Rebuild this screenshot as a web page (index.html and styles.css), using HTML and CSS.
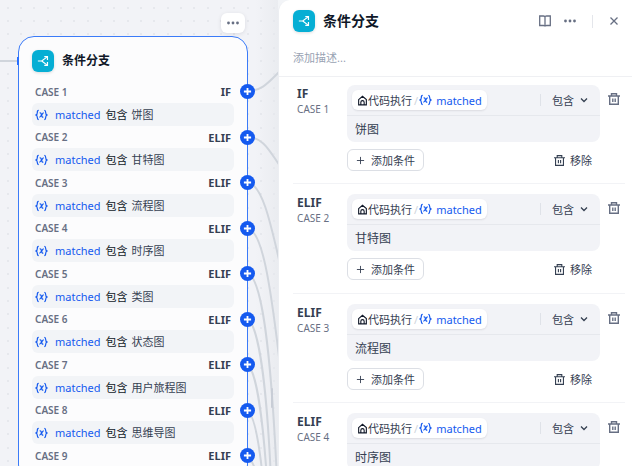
FILE: index.html
```html
<!DOCTYPE html>
<html lang="zh-CN">

<head>
  <meta charset="UTF-8" />
  <meta name="viewport" content="width=device-width, initial-scale=1.0" />
  <title>条件分支</title>
  <link rel="stylesheet" href="styles.css">
</head>

<body>
  <!-- 图标 -->
  <svg class="sprite" aria-hidden="true">
    <symbol id="i-branch" viewBox="0 0 14 14">
      <path d="M1 7h4.500L11.500 2.500M5.500 7L11.500 11.500" />
      <path d="M8.500 2h3.700v3.700M8.500 12h3.700V8.300" />
    </symbol>
    <symbol id="i-var" viewBox="0 0 14 12">
      <path d="M4 1C2.500 1 2.500 2 2.500 3.200C2.500 4.800 2.300 5.600 1 6C2.300 6.400 2.500 7.200 2.500 8.800C2.500 10 2.500 11 4 11M10 1C11.500 1 11.500 2 11.500 3.200C11.500 4.800 11.700 5.600 13 6C11.700 6.400 11.500 7.200 11.500 8.800C11.500 10 11.500 11 10 11" />
      <path d="M5 3.800C6.200 3.400 6.500 4.200 7 6C7.500 7.900 7.800 8.600 9 8.200M9.400 3.800C8 3.500 6.300 8.500 4.700 8.200" />
    </symbol>
    <symbol id="i-plus" viewBox="0 0 10 10">
      <path d="M5 1v8M1 5h8" />
    </symbol>
    <symbol id="i-more" viewBox="0 0 12 4">
      <circle cx="1.500" cy="2" r="1.400" /><circle cx="6" cy="2" r="1.400" /><circle cx="10.500" cy="2" r="1.400" />
    </symbol>
    <symbol id="i-home" viewBox="0 0 10 10">
      <path d="M1.500 4.200L5 1.200l3.500 3V9h-7zM3.500 9V6.600a1.500 1.500 0 0 1 3 0V9" />
    </symbol>
    <symbol id="i-down" viewBox="0 0 8 8">
      <path d="M1 2.500l3 3 3-3" />
    </symbol>
    <symbol id="i-trash" viewBox="0 0 12 12">
      <path d="M0 3h12M3.500 3V0.700h5V3M1.700 3v8.300h8.600V3M4.800 5.500v3.500M7.200 5.500v3.500" />
    </symbol>
    <symbol id="i-book" viewBox="0 0 12 12">
      <path d="M6 1.500v10M0.700 1h3.800Q6 1 6 2.200Q6 1 7.500 1h3.800v9.500H7.500Q6 10.500 6 11.500Q6 10.500 4.500 10.500H0.700z" />
    </symbol>
    <symbol id="i-close" viewBox="0 0 10 10">
      <path d="M1.500 1.500l7 7M8.500 1.500l-7 7" />
    </symbol>
  </svg>

  <div class="workflow">
    <main class="canvas">
      <svg class="edges" aria-hidden="true">
        <defs>
          <pattern id="dots" width="40" height="40" patternUnits="userSpaceOnUse">
            <path d="M7 7h2v2H7zM20 7h2v2h-2zM33 7h2v2h-2zM7 20h2v2H7zM20 20h2v2h-2zM33 20h2v2h-2zM7 33h2v2H7zM20 33h2v2h-2zM33 33h2v2h-2z" />
          </pattern>
        </defs>
        <rect class="dots" width="100%" height="100%" fill="url(#dots)" />
        <path d="M0 61H18" />
        <path d="M247 91C262 91 268 83 280 71" />
        <path d="M247 137C263 137 269 150 280 166" />
        <path d="M247 182C262 184 270 220 280 264" />
        <path d="M247 228C262 230 270 280 280 365" />
        <path d="M247 273C262 276 271 350 277 480" />
        <path d="M247 319C259 324 267 390 271 480" />
        <path d="M247 365C256 368 263 420 267 480" />
        <path d="M247 410C254 414 259 440 263 480" />
        <path d="M247 456C251 459 255 466 258 480" />
      </svg>

      <section class="node">
        <button class="node-more" aria-label="更多"><svg class="dots-icon"><use href="#i-more" /></svg></button>
        <header class="node-title">
          <span class="badge"><svg><use href="#i-branch" /></svg></span>
          <h2>条件分支</h2>
        </header>
        <ul class="cases">
          <li class="case">
            <div class="case-head"><span>CASE 1</span><b>IF</b></div>
            <p class="case-rule"><svg class="var"><use href="#i-var" /></svg><em>matched</em><strong>包含</strong>饼图</p>
            <button class="port" aria-label="添加节点"><svg><use href="#i-plus" /></svg></button>
          </li>
          <li class="case">
            <div class="case-head"><span>CASE 2</span><b>ELIF</b></div>
            <p class="case-rule"><svg class="var"><use href="#i-var" /></svg><em>matched</em><strong>包含</strong>甘特图</p>
            <button class="port" aria-label="添加节点"><svg><use href="#i-plus" /></svg></button>
          </li>
          <li class="case">
            <div class="case-head"><span>CASE 3</span><b>ELIF</b></div>
            <p class="case-rule"><svg class="var"><use href="#i-var" /></svg><em>matched</em><strong>包含</strong>流程图</p>
            <button class="port" aria-label="添加节点"><svg><use href="#i-plus" /></svg></button>
          </li>
          <li class="case">
            <div class="case-head"><span>CASE 4</span><b>ELIF</b></div>
            <p class="case-rule"><svg class="var"><use href="#i-var" /></svg><em>matched</em><strong>包含</strong>时序图</p>
            <button class="port" aria-label="添加节点"><svg><use href="#i-plus" /></svg></button>
          </li>
          <li class="case">
            <div class="case-head"><span>CASE 5</span><b>ELIF</b></div>
            <p class="case-rule"><svg class="var"><use href="#i-var" /></svg><em>matched</em><strong>包含</strong>类图</p>
            <button class="port" aria-label="添加节点"><svg><use href="#i-plus" /></svg></button>
          </li>
          <li class="case">
            <div class="case-head"><span>CASE 6</span><b>ELIF</b></div>
            <p class="case-rule"><svg class="var"><use href="#i-var" /></svg><em>matched</em><strong>包含</strong>状态图</p>
            <button class="port" aria-label="添加节点"><svg><use href="#i-plus" /></svg></button>
          </li>
          <li class="case">
            <div class="case-head"><span>CASE 7</span><b>ELIF</b></div>
            <p class="case-rule"><svg class="var"><use href="#i-var" /></svg><em>matched</em><strong>包含</strong>用户旅程图</p>
            <button class="port" aria-label="添加节点"><svg><use href="#i-plus" /></svg></button>
          </li>
          <li class="case">
            <div class="case-head"><span>CASE 8</span><b>ELIF</b></div>
            <p class="case-rule"><svg class="var"><use href="#i-var" /></svg><em>matched</em><strong>包含</strong>思维导图</p>
            <button class="port" aria-label="添加节点"><svg><use href="#i-plus" /></svg></button>
          </li>
          <li class="case">
            <div class="case-head"><span>CASE 9</span><b>ELIF</b></div>
            <button class="port" aria-label="添加节点"><svg><use href="#i-plus" /></svg></button>
          </li>
        </ul>
      </section>
      <i class="resize-handle"></i>
    </main>

    <aside class="panel">
      <header class="panel-head">
        <div class="panel-bar">
          <span class="badge"><svg><use href="#i-branch" /></svg></span>
          <h1>条件分支</h1>
          <button class="icon-btn" aria-label="文档"><svg class="book"><use href="#i-book" /></svg></button>
          <button class="icon-btn" aria-label="更多"><svg class="dots-icon"><use href="#i-more" /></svg></button>
          <span class="bar-line"></span>
          <button class="icon-btn" aria-label="关闭"><svg class="close"><use href="#i-close" /></svg></button>
        </div>
        <input class="desc" type="text" placeholder="添加描述..." aria-label="描述">
      </header>

      <div class="branches">
        <section class="branch">
          <div class="branch-name"><h3>IF</h3><span>CASE 1</span></div>
          <div class="branch-main">
            <div class="cond">
              <div class="cond-top">
                <button class="pill"><svg class="home"><use href="#i-home" /></svg>代码执行<i>/</i><svg class="var"><use href="#i-var" /></svg><em>matched</em></button>
                <label class="op"><select aria-label="条件"><option>包含</option></select><svg><use href="#i-down" /></svg></label>
              </div>
              <input class="value" type="text" value="饼图" aria-label="值">
            </div>
            <div class="actions">
              <button class="add"><svg><use href="#i-plus" /></svg>添加条件</button>
              <button class="remove"><svg><use href="#i-trash" /></svg>移除</button>
            </div>
          </div>
          <button class="del" aria-label="删除条件"><svg><use href="#i-trash" /></svg></button>
        </section>

        <section class="branch">
          <div class="branch-name"><h3>ELIF</h3><span>CASE 2</span></div>
          <div class="branch-main">
            <div class="cond">
              <div class="cond-top">
                <button class="pill"><svg class="home"><use href="#i-home" /></svg>代码执行<i>/</i><svg class="var"><use href="#i-var" /></svg><em>matched</em></button>
                <label class="op"><select aria-label="条件"><option>包含</option></select><svg><use href="#i-down" /></svg></label>
              </div>
              <input class="value" type="text" value="甘特图" aria-label="值">
            </div>
            <div class="actions">
              <button class="add"><svg><use href="#i-plus" /></svg>添加条件</button>
              <button class="remove"><svg><use href="#i-trash" /></svg>移除</button>
            </div>
          </div>
          <button class="del" aria-label="删除条件"><svg><use href="#i-trash" /></svg></button>
        </section>

        <section class="branch">
          <div class="branch-name"><h3>ELIF</h3><span>CASE 3</span></div>
          <div class="branch-main">
            <div class="cond">
              <div class="cond-top">
                <button class="pill"><svg class="home"><use href="#i-home" /></svg>代码执行<i>/</i><svg class="var"><use href="#i-var" /></svg><em>matched</em></button>
                <label class="op"><select aria-label="条件"><option>包含</option></select><svg><use href="#i-down" /></svg></label>
              </div>
              <input class="value" type="text" value="流程图" aria-label="值">
            </div>
            <div class="actions">
              <button class="add"><svg><use href="#i-plus" /></svg>添加条件</button>
              <button class="remove"><svg><use href="#i-trash" /></svg>移除</button>
            </div>
          </div>
          <button class="del" aria-label="删除条件"><svg><use href="#i-trash" /></svg></button>
        </section>

        <section class="branch">
          <div class="branch-name"><h3>ELIF</h3><span>CASE 4</span></div>
          <div class="branch-main">
            <div class="cond">
              <div class="cond-top">
                <button class="pill"><svg class="home"><use href="#i-home" /></svg>代码执行<i>/</i><svg class="var"><use href="#i-var" /></svg><em>matched</em></button>
                <label class="op"><select aria-label="条件"><option>包含</option></select><svg><use href="#i-down" /></svg></label>
              </div>
              <input class="value" type="text" value="时序图" aria-label="值">
            </div>
          </div>
          <button class="del" aria-label="删除条件"><svg><use href="#i-trash" /></svg></button>
        </section>
      </div>
    </aside>
  </div>
</body>

</html>
```
FILE: styles.css
```css
* {
  box-sizing: border-box;
}

body {
  margin: 0;
  font-family: "Noto Sans", "Noto Sans CJK SC", sans-serif;
  font-size: 11px;
  color: #354052;
}

h1,
h2,
h3,
p,
ul {
  margin: 0;
  padding: 0;
}

ul {
  list-style: none;
}

em,
i {
  font-style: normal;
}

button,
input,
select {
  margin: 0;
  padding: 0;
  border: none;
  background: none;
  font: inherit;
  color: inherit;
}

button {
  cursor: pointer;
}

svg {
  display: block;
  flex: none;
  fill: none;
  stroke: currentColor;
}

.sprite {
  position: absolute;
  width: 0;
  height: 0;
}

.workflow {
  display: flex;
  height: 100vh;
  overflow: hidden;
  background: #f2f4f7;
}

/* 左侧画布 */
.canvas {
  position: relative;
  flex: 0 0 44%;
  min-width: 0;
  background: linear-gradient(to right, #f2f3f7 92%, #eaecf0);
}

.edges {
  position: absolute;
  width: 100%;
  height: 100%;
  stroke: #d0d5dc;
  stroke-width: 2;
}

.dots {
  stroke: none;
}

#dots path {
  fill: #e6e8ed;
  stroke: none;
}

.node {
  position: absolute;
  left: 18px;
  top: 36px;
  width: 230px;
  padding: 13px;
  border: 1px solid #3b7bf8;
  border-radius: 16px;
  background: #fcfcfd;
}

.node::before {
  content: "";
  position: absolute;
  left: -2px;
  top: 20px;
  width: 2px;
  height: 8px;
  background: #2970ff;
}

.node-more {
  position: absolute;
  right: 2px;
  top: -24px;
  display: flex;
  align-items: center;
  justify-content: center;
  width: 24px;
  height: 20px;
  border-radius: 6px;
  background: #fff;
  box-shadow: 0 1px 4px rgba(16, 24, 40, 0.1);
  color: #676f83;
}

.dots-icon {
  width: 12px;
  height: 4px;
  fill: currentColor;
  stroke: none;
}

.badge {
  display: flex;
  align-items: center;
  justify-content: center;
  flex: none;
  width: 22px;
  height: 22px;
  border-radius: 6px;
  background: #06aed4;
  box-shadow: 0 1px 3px rgba(16, 24, 40, 0.15);
  color: #fff;
}

.badge svg {
  width: 12px;
  height: 12px;
  stroke-width: 1.4;
}

.node-title {
  display: flex;
  align-items: center;
  gap: 8px;
  margin-bottom: 8px;
}

.node-title h2 {
  font-size: 12px;
  line-height: 22px;
  color: #101828;
}

.case {
  position: relative;
}

.case-head {
  display: flex;
  align-items: center;
  justify-content: space-between;
  height: 23px;
  padding: 0 3px;
}

.case:nth-child(even) .case-head {
  height: 22px;
}

.case-head span {
  font-size: 10px;
  font-weight: 600;
  color: #676f83;
}

.case-head b {
  font-size: 11px;
}

.case-rule {
  display: flex;
  align-items: center;
  height: 23px;
  padding: 0 3px;
  border-radius: 6px;
  background: #f2f4f7;
  line-height: 23px;
}

.var {
  width: 13px;
  height: 12px;
  color: #155aef;
  stroke-width: 1.3;
}

.case-rule em {
  margin: 0 5px 0 7px;
  color: #155aef;
}

.case-rule strong {
  margin-right: 4px;
  font-weight: 400;
  color: #101828;
}

.port {
  position: absolute;
  right: -21px;
  top: 4px;
  display: flex;
  align-items: center;
  justify-content: center;
  width: 15px;
  height: 15px;
  border-radius: 50%;
  background: #155aef;
  color: #fff;
}

.port svg {
  width: 9px;
  height: 9px;
  stroke-width: 2;
}

.resize-handle {
  position: absolute;
  right: 5px;
  top: 388px;
  width: 2px;
  height: 20px;
  border-radius: 1px;
  background: #c8cdd6;
}

/* 右侧面板 */
.panel {
  position: relative;
  flex: 1;
  min-width: 0;
  overflow: hidden;
  border-left: 1px solid #eceef2;
  border-radius: 12px 0 0 0;
  background: #fff;
}

.panel-head {
  padding: 10px 12px 10px 14px;
  border-bottom: 1px solid #eff0f3;
}

.panel-bar {
  display: flex;
  align-items: center;
  height: 22px;
}

.panel-bar h1 {
  flex: 1;
  margin-left: 8px;
  font-size: 14px;
  line-height: 22px;
  color: #101828;
}

.icon-btn {
  display: flex;
  align-items: center;
  justify-content: center;
  width: 12px;
  height: 22px;
  color: #676f83;
}

.icon-btn + .icon-btn {
  margin-left: 13px;
}

.icon-btn .book {
  width: 12px;
  height: 12px;
  stroke-width: 1.3;
}

.icon-btn .close {
  width: 10px;
  height: 10px;
  stroke-width: 1.3;
}

.bar-line {
  width: 1px;
  height: 13px;
  margin: 0 15px 0 16px;
  background: #e4e6eb;
}

.desc {
  display: block;
  width: 100%;
  height: 18px;
  margin-top: 16px;
}

.desc::placeholder {
  color: #98a2b3;
}

.branches {
  padding: 8px 7px 0 14px;
}

.branch {
  display: flex;
  align-items: flex-start;
  padding-bottom: 12px;
  border-bottom: 1px solid #f2f3f6;
}

.branch + .branch {
  padding-top: 10px;
}

.branch:nth-child(even) {
  padding-bottom: 13px;
}

.branch-name {
  width: 54px;
  padding-left: 4px;
}

.branch-name h3 {
  font-size: 12px;
  line-height: 17px;
}

.branch-name span {
  display: block;
  font-size: 10px;
  line-height: 14px;
  color: #676f83;
}

.branch-main {
  flex: 1;
  min-width: 0;
}

.cond {
  border-radius: 8px;
  background: #f2f3f7;
}

.cond-top {
  display: flex;
  align-items: center;
  justify-content: space-between;
  height: 31px;
  padding: 0 12px 0 5px;
  border-bottom: 1px solid #e6e8ed;
}

.pill {
  display: flex;
  align-items: center;
  height: 20px;
  padding: 0 5px;
  border-radius: 6px;
  background: #fff;
  box-shadow: 0 1px 2px rgba(16, 24, 40, 0.1);
}

.pill i {
  margin: 0 1px 0 2px;
  color: #d0d5dc;
}

.pill em {
  margin-left: 4px;
  color: #155aef;
}

.home {
  width: 11px;
  height: 11px;
  color: #101828;
}

.op {
  display: flex;
  align-items: center;
  gap: 5px;
  height: 12px;
  padding-left: 11px;
  border-left: 1px solid #dfe2e8;
}

.op select {
  appearance: none;
  width: 23px;
  height: 18px;
}

.op svg {
  width: 8px;
  height: 8px;
  stroke-width: 1.3;
}

.value {
  display: block;
  width: 100%;
  height: 26px;
  padding: 0 8px;
  font-size: 12px;
}

.actions {
  display: flex;
  align-items: center;
  justify-content: space-between;
  margin-top: 7px;
  padding-right: 8px;
}

.add,
.remove {
  display: flex;
  align-items: center;
  height: 22px;
}

.add {
  gap: 6px;
  padding: 0 8px;
  border: 1px solid #dcdfe5;
  border-radius: 6px;
}

.add svg {
  width: 9px;
  height: 9px;
}

.remove {
  gap: 5px;
}

.remove svg {
  width: 11px;
  height: 11px;
  stroke-width: 1.2;
}

.del {
  margin: 8px 5px 0 8px;
  color: #676f83;
}

.del svg {
  width: 12px;
  height: 12px;
  stroke-width: 1.4;
}
```
